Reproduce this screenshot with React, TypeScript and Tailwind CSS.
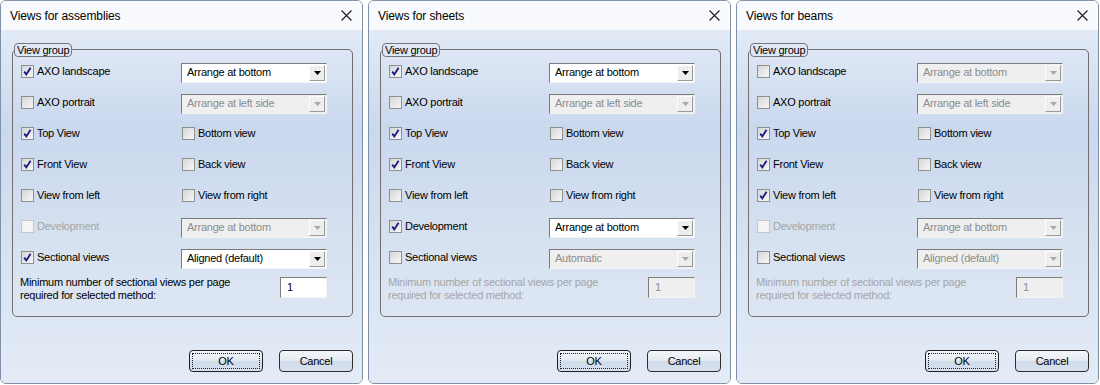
type Row = {
  label: string;
  checked?: boolean;
  disabled?: boolean;
  select?: { value: string; enabled: boolean };
  right?: { label: string; checked?: boolean };
};

type DialogData = {
  title: string;
  rows: Row[];
  minEnabled: boolean;
};

const dialogs: DialogData[] = [
  {
    title: "Views for assemblies",
    minEnabled: true,
    rows: [
      { label: "AXO landscape", checked: true, select: { value: "Arrange at bottom", enabled: true } },
      { label: "AXO portrait", select: { value: "Arrange at left side", enabled: false } },
      { label: "Top View", checked: true, right: { label: "Bottom view" } },
      { label: "Front View", checked: true, right: { label: "Back view" } },
      { label: "View from left", right: { label: "View from right" } },
      { label: "Development", disabled: true, select: { value: "Arrange at bottom", enabled: false } },
      { label: "Sectional views", checked: true, select: { value: "Aligned (default)", enabled: true } },
    ],
  },
  {
    title: "Views for sheets",
    minEnabled: false,
    rows: [
      { label: "AXO landscape", checked: true, select: { value: "Arrange at bottom", enabled: true } },
      { label: "AXO portrait", select: { value: "Arrange at left side", enabled: false } },
      { label: "Top View", checked: true, right: { label: "Bottom view" } },
      { label: "Front View", checked: true, right: { label: "Back view" } },
      { label: "View from left", right: { label: "View from right" } },
      { label: "Development", checked: true, select: { value: "Arrange at bottom", enabled: true } },
      { label: "Sectional views", select: { value: "Automatic", enabled: false } },
    ],
  },
  {
    title: "Views for beams",
    minEnabled: false,
    rows: [
      { label: "AXO landscape", select: { value: "Arrange at bottom", enabled: false } },
      { label: "AXO portrait", select: { value: "Arrange at left side", enabled: false } },
      { label: "Top View", checked: true, right: { label: "Bottom view" } },
      { label: "Front View", checked: true, right: { label: "Back view" } },
      { label: "View from left", checked: true, right: { label: "View from right" } },
      { label: "Development", disabled: true, select: { value: "Arrange at bottom", enabled: false } },
      { label: "Sectional views", select: { value: "Aligned (default)", enabled: false } },
    ],
  },
];

const CheckBox = ({ checked, disabled }: { checked?: boolean; disabled?: boolean }) => (
  <span
    className={`relative block w-[13px] h-[13px] shrink-0 border ${
      disabled
        ? "border-[#c5c5c5] bg-[#f4f4f4]"
        : "border-[#8e8f8f] bg-[linear-gradient(135deg,#d6d6d6,#f8f8f8)]"
    }`}
  >
    {checked && (
      <svg width="11" height="11" viewBox="0 0 11 11" className="absolute left-0 top-0">
        <path d="M2.2 5.6 L4.3 8.4 L8.6 1.8" fill="none" stroke="#1c1c86" strokeWidth="1.9" />
      </svg>
    )}
  </span>
);

const Check = ({ label, checked, disabled }: { label: string; checked?: boolean; disabled?: boolean }) => (
  <div className="flex items-center gap-[3px]">
    <CheckBox checked={checked} disabled={disabled} />
    <span className={disabled ? "text-[#a6a6a6]" : "text-black"}>{label}</span>
  </div>
);

const Select = ({ value, enabled }: { value: string; enabled: boolean }) => (
  <div
    className={`flex items-center w-[146px] h-[20px] mt-[2px] border border-t-[#7b7b7b] border-l-[#7b7b7b] border-r-[#f4f4f4] border-b-[#f4f4f4] ${
      enabled ? "bg-white" : "bg-[#efefef]"
    }`}
  >
    <span className={`flex-1 pl-[5px] ${enabled ? "text-black" : "text-[#8c8c8c]"}`}>{value}</span>
    <span className="flex items-center justify-center w-[16px] h-[16px] mr-[1px] bg-[#eeeeee] border border-t-white border-l-white border-r-[#9a9a9a] border-b-[#9a9a9a]">
      <svg width="7" height="4" viewBox="0 0 7 4">
        <path d="M0 0 H7 L3.5 4 Z" fill={enabled ? "#000" : "#a8a8a8"} />
      </svg>
    </span>
  </div>
);

const Button = ({ label, focused }: { label: string; focused?: boolean }) => (
  <div
    className={`flex items-center justify-center w-[74px] h-[22px] rounded-[4px] border bg-[linear-gradient(#f3f5f8,#e6ecf4_45%,#cfdbeb_55%,#d9e3f0)] ${
      focused ? "border-[#1e1e1e] p-[2px]" : "border-[#2e2e2e]"
    }`}
  >
    <div
      className={`flex items-center justify-center w-full h-full ${
        focused ? "border border-dotted border-[#222]" : ""
      }`}
    >
      {label}
    </div>
  </div>
);

const Dialog = ({ data }: { data: DialogData }) => (
  <div className="flex flex-col w-[363px] h-[384px] shrink-0 border border-[#7f91a6] rounded-[6px] overflow-hidden">
    <div className="flex items-center justify-between h-[29px] pl-[9px] pr-[9px] bg-[#f8fafd] text-[12px] tracking-[-0.1px] text-black">
      <span>{data.title}</span>
      <svg width="11" height="11" viewBox="0 0 11 11" className="mr-[1px]">
        <path d="M0.5 0.5 L10.5 10.5 M10.5 0.5 L0.5 10.5" stroke="#1a1a1a" strokeWidth="1.1" />
      </svg>
    </div>
    <div className="flex flex-col flex-1 pl-[11px] pr-[9px] pt-[19px] bg-[linear-gradient(#e2eaf6,#cad8ee_28%,#d4e0f0_55%,#e4ebf6)]">
      <div className="relative h-[268px] border border-[#6f6f6f] rounded-[5px] pt-[6px]">
        <div className="absolute -top-[7px] left-[1px] h-[14px] px-[2px] flex items-center border border-[#777] rounded-[4px] bg-[#dfe8f5] leading-none">
          View group
        </div>
        {data.rows.map((r) => (
          <div key={r.label} className="flex items-center h-[31px] pl-[8px]">
            <div className="w-[160px]">
              <Check label={r.label} checked={r.checked} disabled={r.disabled} />
            </div>
            {r.select && <Select value={r.select.value} enabled={r.select.enabled} />}
            {r.right && (
              <div className="ml-[1px]">
                <Check label={r.right.label} checked={r.right.checked} />
              </div>
            )}
          </div>
        ))}
        <div className="flex items-start pl-[7px] mt-[3px]">
          <div className={`w-[260px] leading-[13px] ${data.minEnabled ? "text-black" : "text-[#a6a6a6]"}`}>
            Minimum number of sectional views per page
            <br />
            required for selected method:
          </div>
          <div
            className={`flex items-center w-[47px] h-[21px] mt-[1px] pl-[6px] border border-t-[#7b7b7b] border-l-[#7b7b7b] border-r-[#f4f4f4] border-b-[#f4f4f4] ${
              data.minEnabled ? "bg-white text-black" : "bg-[#efefef] text-[#8c8c8c]"
            }`}
          >
            1
          </div>
        </div>
      </div>
      <div className="flex justify-end gap-[16px] mt-[33px]">
        <Button label="OK" focused />
        <Button label="Cancel" />
      </div>
    </div>
  </div>
);

export default function App() {
  return (
    <div className="flex gap-[5px] w-[1100px] h-[385px] bg-white font-['Liberation_Sans',Arial,sans-serif] text-[11px] tracking-[-0.25px] text-black">
      {dialogs.map((d) => (
        <Dialog key={d.title} data={d} />
      ))}
    </div>
  );
}
